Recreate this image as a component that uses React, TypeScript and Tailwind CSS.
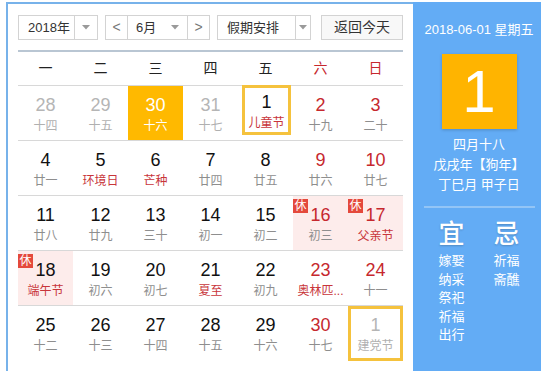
import React from 'react';

type Cell = {
    d: number;
    l: string;
    other?: boolean;
    sel?: boolean;
    today?: 'a' | 'b';
    red?: boolean;
    fest?: boolean;
    rest?: boolean;
};

const rows: Cell[][] = [
    [
        { d: 28, l: '十四', other: true },
        { d: 29, l: '十五', other: true },
        { d: 30, l: '十六', sel: true },
        { d: 31, l: '十七', other: true },
        { d: 1, l: '儿童节', fest: true, today: 'a' },
        { d: 2, l: '十九', red: true },
        { d: 3, l: '二十', red: true },
    ],
    [
        { d: 4, l: '廿一' },
        { d: 5, l: '环境日', fest: true },
        { d: 6, l: '芒种', fest: true },
        { d: 7, l: '廿四' },
        { d: 8, l: '廿五' },
        { d: 9, l: '廿六', red: true },
        { d: 10, l: '廿七', red: true },
    ],
    [
        { d: 11, l: '廿八' },
        { d: 12, l: '廿九' },
        { d: 13, l: '三十' },
        { d: 14, l: '初一' },
        { d: 15, l: '初二' },
        { d: 16, l: '初三', red: true, rest: true },
        { d: 17, l: '父亲节', red: true, fest: true, rest: true },
    ],
    [
        { d: 18, l: '端午节', fest: true, rest: true },
        { d: 19, l: '初六' },
        { d: 20, l: '初七' },
        { d: 21, l: '夏至', fest: true },
        { d: 22, l: '初九' },
        { d: 23, l: '奥林匹...', red: true, fest: true },
        { d: 24, l: '十一', red: true },
    ],
    [
        { d: 25, l: '十二' },
        { d: 26, l: '十三' },
        { d: 27, l: '十四' },
        { d: 28, l: '十五' },
        { d: 29, l: '十六' },
        { d: 30, l: '十七', red: true },
        { d: 1, l: '建党节', other: true, today: 'b' },
    ],
];

const weekdays = ['一', '二', '三', '四', '五', '六', '日'];

function Arrow() {
    return (
        <svg width="8" height="5" viewBox="0 0 8 5" className="shrink-0">
            <path d="M0 0 L8 0 L4 4.5 Z" fill="#9a9a9a" />
        </svg>
    );
}

function DayCell({ c }: { c: Cell }) {
    let numColor = 'text-[#111]';
    let lunColor = c.fest ? 'text-[#c8353a]' : 'text-[#8e8e8e]';
    if (c.red) numColor = 'text-[#c6282e]';
    if (c.other) {
        numColor = 'text-[#b5b5b5]';
        lunColor = 'text-[#b0b0b0]';
    }
    if (c.sel) {
        numColor = 'text-white';
        lunColor = 'text-white';
    }
    const bg = c.sel ? 'bg-[#ffb900]' : c.rest ? 'bg-[#fdeceb]' : '';

    const content = (
        <>
            <span className={`text-[18px] leading-[20px] ${numColor}`}>{c.d}</span>
            <span className={`text-[12px] leading-[16px] mt-[3px] whitespace-nowrap ${lunColor}`}>{c.l}</span>
        </>
    );

    return (
        <div className={`relative w-[55px] h-[54px] ${bg}`}>
            {c.rest && (
                <span className="absolute left-0 top-[3px] w-[15px] h-[14px] bg-[#e4493c] text-white text-[12px] leading-[14px] text-center">
                    休
                </span>
            )}
            {c.today === 'a' ? (
                <div className="ml-[4px] -mt-px w-[49px] h-[50px] border-[3px] border-[#f5c23d] flex flex-col items-center pt-[4px]">
                    {content}
                </div>
            ) : c.today === 'b' ? (
                <div className="w-[55px] h-[55px] border-[3px] border-[#f5c23d] flex flex-col items-center pt-[6px]">
                    {content}
                </div>
            ) : (
                <div className="flex flex-col items-center pt-[9px]">{content}</div>
            )}
        </div>
    );
}

export default function App() {
    return (
        <div className="w-[541px] h-[371px] overflow-hidden bg-white pl-[6px] pt-[2px] font-['Liberation_Sans','Noto_Sans_CJK_SC',sans-serif]">
            <div className="flex h-[400px] border-l-2 border-t-2 border-[#77b2ea]">
                {/* Calendar */}
                <div className="w-[405px] shrink-0 px-[10px] pt-[11px]">
                    {/* Toolbar */}
                    <div className="flex items-center h-[25px] text-[13px] text-[#333]">
                        <div className="flex items-center w-[80px] h-[25px] border border-[#d3d3d3]">
                            <span className="pl-[9px] w-[55px]">2018年</span>
                            <span className="h-full border-l border-[#d3d3d3]" />
                            <span className="flex-1 flex justify-center"><Arrow /></span>
                        </div>
                        <div className="flex items-center ml-[7px] w-[105px] h-[25px] border border-[#d3d3d3]">
                            <span className="w-[21px] h-full flex items-center justify-center text-[#777] text-[14px]">&lt;</span>
                            <span className="h-full border-l border-[#d3d3d3]" />
                            <span className="pl-[8px] w-[43px]">6月</span>
                            <Arrow />
                            <span className="w-[8px]" />
                            <span className="h-full border-l border-[#d3d3d3]" />
                            <span className="flex-1 h-full flex items-center justify-center text-[#777] text-[14px]">&gt;</span>
                        </div>
                        <div className="flex items-center ml-[7px] w-[94px] h-[25px] border border-[#d3d3d3]">
                            <span className="pl-[9px] w-[77px]">假期安排</span>
                            <span className="h-full border-l border-[#d3d3d3]" />
                            <span className="flex-1 flex justify-center"><Arrow /></span>
                        </div>
                        <div className="ml-[10px] w-[82px] h-[25px] border border-[#d3d3d3] bg-[#f8f8f8] flex items-center justify-center text-[14px]">
                            返回今天
                        </div>
                    </div>

                    {/* Weekday header */}
                    <div className="mt-[10px] border-t-2 border-[#b9c6d3] flex h-[36px] border-b border-b-[#d8d8d8]">
                        {weekdays.map((w, i) => (
                            <div
                                key={w}
                                className={`w-[55px] flex items-center justify-center text-[14px] ${i >= 5 ? 'text-[#c6282e]' : 'text-[#222]'}`}
                            >
                                {w}
                            </div>
                        ))}
                    </div>

                    {/* Days */}
                    {rows.map((r, ri) => (
                        <div key={ri} className={`flex ${ri < rows.length - 1 ? 'border-b border-[#d8d8d8]' : ''}`}>
                            {r.map((c, ci) => (
                                <DayCell key={ci} c={c} />
                            ))}
                        </div>
                    ))}
                </div>

                {/* Side panel */}
                <div className="w-[132px] shrink-0 bg-[#63acf5] text-white flex flex-col items-center -mt-[2px]">
                    <div className="mt-[20px] text-[13px] leading-[16px] whitespace-nowrap">2018-06-01 星期五</div>
                    <div className="mt-[16px] w-[75px] h-[75px] bg-[#ffb400] shadow-[0_1px_3px_rgba(0,0,0,0.2)] flex items-center justify-center text-[60px] leading-none">
                        1
                    </div>
                    <div className="mt-[6px] text-[13px] leading-[20px] text-center">
                        <div>四月十八</div>
                        <div>戊戌年【狗年】</div>
                        <div>丁巳月 甲子日</div>
                    </div>
                    <div className="mt-[11px] w-[111px] border-t-2 border-[#93c5f6]" />
                    <div className="mt-[11px] flex gap-[29px]">
                        <div className="flex flex-col items-center w-[26px]">
                            <span className="text-[26px] leading-[30px] font-medium [text-shadow:0_1px_2px_rgba(0,0,0,0.2)]">宜</span>
                            <div className="mt-[3px] text-[13px] leading-[18.5px] flex flex-col items-center">
                                <span>嫁娶</span>
                                <span>纳采</span>
                                <span>祭祀</span>
                                <span>祈福</span>
                                <span>出行</span>
                            </div>
                        </div>
                        <div className="flex flex-col items-center w-[26px]">
                            <span className="text-[26px] leading-[30px] font-medium [text-shadow:0_1px_2px_rgba(0,0,0,0.2)]">忌</span>
                            <div className="mt-[3px] text-[13px] leading-[18.5px] flex flex-col items-center">
                                <span>祈福</span>
                                <span>斋醮</span>
                            </div>
                        </div>
                    </div>
                </div>
            </div>
        </div>
    );
}
